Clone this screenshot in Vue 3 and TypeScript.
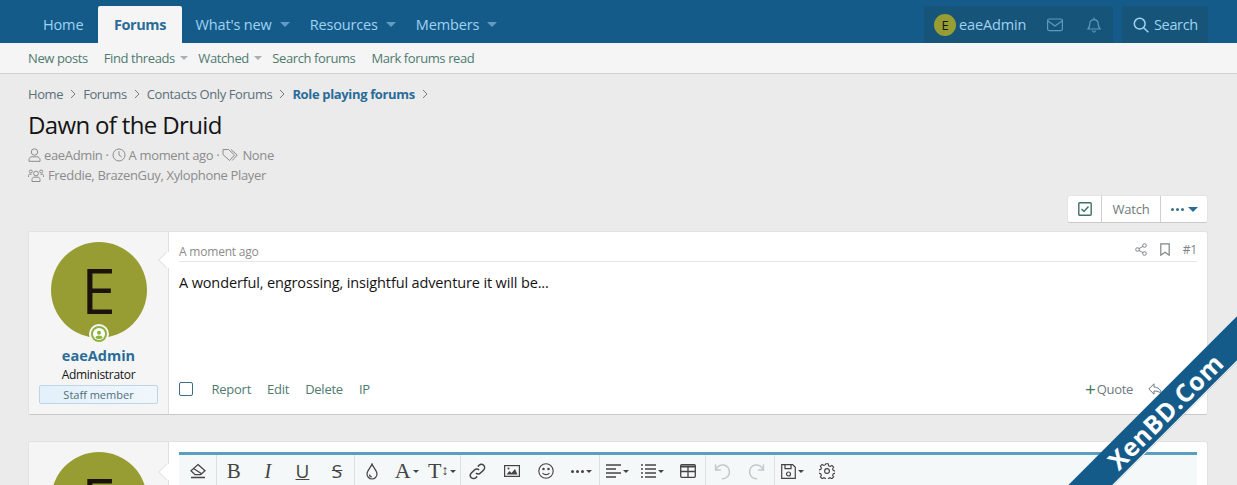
<script setup lang="ts">
interface NavItem {
  label: string
  active?: boolean
  caret?: boolean
}

const navItems: NavItem[] = [
  { label: 'Home' },
  { label: 'Forums', active: true },
  { label: "What's new", caret: true },
  { label: 'Resources', caret: true },
  { label: 'Members', caret: true }
]

const subItems: NavItem[] = [
  { label: 'New posts' },
  { label: 'Find threads', caret: true },
  { label: 'Watched', caret: true },
  { label: 'Search forums' },
  { label: 'Mark forums read' }
]

const crumbs = ['Home', 'Forums', 'Contacts Only Forums']
const postLinks = ['Report', 'Edit', 'Delete', 'IP']
</script>

<template>
  <div class="page">
    <header class="nav">
      <nav class="nav-left">
        <a v-for="item in navItems" :key="item.label" class="nav-tab" :class="{ active: item.active, 'has-caret': item.caret }">
          {{ item.label }}
          <i v-if="item.caret" class="caret" />
        </a>
      </nav>
      <div class="nav-right">
        <div class="visitor">
          <a class="visitor-item user">
            <span class="mini-avatar">E</span>
            eaeAdmin
          </a>
          <a class="visitor-item icon">
            <svg width="16" height="14" viewBox="0 0 16 14" fill="none" stroke="currentColor" stroke-width="1.2">
              <rect x="0.6" y="1" width="14.8" height="11.6" rx="1.5" />
              <path d="M1 3l7 5 7-5" />
            </svg>
          </a>
          <a class="visitor-item icon">
            <svg width="14" height="16" viewBox="0 0 14 16" fill="none" stroke="currentColor" stroke-width="1.2">
              <path d="M1 12c1.4-1.5 1.8-2.6 1.8-5.2C2.800 4.300 4.700 2.600 7 2.600s4.200 1.700 4.200 4.200c0 2.600.4 3.700 1.800 5.200z" />
              <path d="M7 .5v2M5.500 13.500c.2 1 .8 1.600 1.500 1.600s1.300-.6 1.500-1.600" />
            </svg>
          </a>
        </div>
        <a class="search-box">
          <svg width="16" height="16" viewBox="0 0 16 16" fill="none" stroke="currentColor" stroke-width="1.500">
            <circle cx="6.700" cy="6.700" r="5.400" />
            <path d="M10.700 10.700l4.600 4.600" />
          </svg>
          Search
        </a>
      </div>
    </header>

    <div class="subnav">
      <a v-for="item in subItems" :key="item.label" class="sub-link" :class="{ 'has-caret': item.caret }">
        {{ item.label }}
        <i v-if="item.caret" class="caret grey" />
      </a>
    </div>

    <main class="body">
      <ul class="crumbs">
        <li v-for="crumb in crumbs" :key="crumb">
          {{ crumb }}
          <svg class="chev" width="6" height="10" viewBox="0 0 6 10" fill="none" stroke="currentColor"><path d="M1 1l4 4-4 4" /></svg>
        </li>
        <li class="current">
          Role playing forums
          <svg class="chev" width="6" height="10" viewBox="0 0 6 10" fill="none" stroke="#6a7c86"><path d="M1 1l4 4-4 4" /></svg>
        </li>
      </ul>

      <h1 class="title">Dawn of the Druid</h1>

      <div class="meta">
        <svg width="13" height="14" viewBox="0 0 13 14" fill="none" stroke="currentColor"><circle cx="6.500" cy="4" r="3.200" /><path d="M1 13.300v-1.500c0-2 1.500-3 3-3h5c1.500 0 3 1 3 3v1.500z" /></svg>
        <span class="meta-text">eaeAdmin ·</span>
        <svg width="14" height="14" viewBox="0 0 14 14" fill="none" stroke="currentColor"><circle cx="7" cy="7" r="6" /><path d="M7 3.200V7l2.700 2" /></svg>
        <span class="meta-text">A moment ago ·</span>
        <svg width="17" height="14" viewBox="0 0 17 14" fill="none" stroke="currentColor"><path d="M1 1.500h5.500l6 5.500-5 5.500-6.500-6z" /><path d="M9 1.500l6.200 5.500-5 5.500" /></svg>
        <span class="meta-text">None</span>
      </div>
      <div class="meta second">
        <svg width="16" height="13" viewBox="0 0 16 13" fill="none" stroke="currentColor"><circle cx="8" cy="4.500" r="2.400" /><circle cx="2.800" cy="2.500" r="1.500" /><circle cx="13.200" cy="2.500" r="1.500" /><path d="M4 12.500v-2c0-1.500 1-2.300 2-2.300h4c1 0 2 .8 2 2.300v2zM.5 8V6.500c0-.8.500-1.200 1.200-1.200h1.800M15.500 8V6.500c0-.8-.5-1.200-1.200-1.200h-1.800" /></svg>
        <span class="meta-text">Freddie, BrazenGuy, Xylophone Player</span>
      </div>

      <div class="actions">
        <div class="btn-group">
          <a class="btn check">
            <svg width="14" height="14" viewBox="0 0 14 14" fill="none" stroke="#3f6e66" stroke-width="1.400"><rect x="0.800" y="0.800" width="12.400" height="12.400" rx="1" /><path d="M3.500 7l2.500 2.500 4.500-5" /></svg>
          </a>
          <a class="btn">Watch</a>
          <a class="btn more">
            <span class="dots"><i /><i /><i /></span>
            <i class="caret blue" />
          </a>
        </div>
      </div>

      <article class="card post">
        <aside class="user-cell">
          <div class="avatar-wrap">
            <div class="avatar">E</div>
            <span class="status">
              <svg width="12" height="12" viewBox="0 0 12 12"><circle cx="6" cy="6" r="6" fill="#fff" /><circle cx="6" cy="4.700" r="2" fill="#8cb33c" /><path d="M2.300 9.700c.6-1.500 2-2.200 3.700-2.200s3.100.7 3.700 2.200A5.200 5.200 0 0 1 6 11a5.200 5.200 0 0 1-3.700-1.300z" fill="#8cb33c" /></svg>
            </span>
          </div>
          <div class="user-name">eaeAdmin</div>
          <div class="user-title">Administrator</div>
          <div class="user-banner">Staff member</div>
        </aside>
        <div class="post-main">
          <i class="arrow" />
          <div class="post-head">
            <span>A moment ago</span>
            <span class="post-tools">
              <svg width="12" height="13" viewBox="0 0 12 13" fill="none" stroke="currentColor"><circle cx="2.500" cy="6.500" r="1.800" /><circle cx="9.500" cy="2.500" r="1.800" /><circle cx="9.500" cy="10.500" r="1.800" /><path d="M4 5.600l4-2.300M4 7.400l4 2.300" /></svg>
              <svg width="10" height="13" viewBox="0 0 10 13" fill="none" stroke="currentColor" stroke-width="1.200"><path d="M.8.800h8.400v11.400L5 9.300.8 12.200z" /></svg>
              <span>#1</span>
            </span>
          </div>
          <p class="post-text">A wonderful, engrossing, insightful adventure it will be...</p>
          <div class="post-foot">
            <div class="foot-left">
              <span class="checkbox" />
              <a v-for="link in postLinks" :key="link">{{ link }}</a>
            </div>
            <div class="foot-right">
              <a class="quote"><span class="plus">+</span>Quote</a>
              <svg width="14" height="12" viewBox="0 0 14 12" fill="none" stroke="#6b7a80"><path d="M6 .8L.8 6 6 11.200V8c3 0 5.500.5 7.500 3C13 6.500 10 4.200 6 4z" /></svg>
            </div>
          </div>
        </div>
      </article>

      <section class="card reply">
        <aside class="user-cell">
          <div class="avatar-wrap">
            <div class="avatar">E</div>
          </div>
        </aside>
        <div class="post-main">
          <i class="arrow low" />
          <div class="editor">
            <div class="toolbar">
              <span class="tb first">
                <svg width="18" height="16" viewBox="0 0 18 16" fill="none" stroke="#444" stroke-width="1.300"><path d="M9 1.500l7 6.200-4.500 4H6L2 7.700z" /><path d="M4.500 5.500l8.500 5.500M2 14.500h14" /></svg>
              </span>
              <span class="tb sep serif bold">B</span>
              <span class="tb serif ital">I</span>
              <span class="tb under">U</span>
              <span class="tb strike">S</span>
              <span class="tb sep">
                <svg width="12" height="17" viewBox="0 0 12 17" fill="none" stroke="#444" stroke-width="1.200"><path d="M6 1C5 4 1 7.500 1 11a5 5 0 0 0 10 0C11 7.500 7 4 6 1z" /><path d="M3.500 11.500c0 1.400 1 2.300 2.300 2.300" /></svg>
              </span>
              <span class="tb wide serif big">A<i class="caret dark" /></span>
              <span class="tb wide serif big">T<small>↕</small><i class="caret dark" /></span>
              <span class="tb sep">
                <svg width="17" height="17" viewBox="0 0 16 16" fill="none" stroke="#444" stroke-width="1.400"><path d="M6.500 9.500a3 3 0 0 0 4.300 0l3-3a3 3 0 0 0-4.300-4.300L8.300 3.400" /><path d="M9.500 6.500a3 3 0 0 0-4.300 0l-3 3a3 3 0 0 0 4.300 4.300l1.200-1.200" /></svg>
              </span>
              <span class="tb">
                <svg width="16" height="12" viewBox="0 0 16 12"><rect x="0.600" y="0.600" width="14.800" height="10.800" fill="none" stroke="#444" stroke-width="1.200" /><path d="M2.500 9.500l3-3.500 2 2 3.500-4 2.500 5.500z" fill="#444" /><circle cx="4.500" cy="3.500" r="1" fill="#444" /></svg>
              </span>
              <span class="tb">
                <svg width="16" height="16" viewBox="0 0 16 16" fill="none" stroke="#444" stroke-width="1.100"><circle cx="8" cy="8" r="7.200" /><circle cx="5.500" cy="6" r=".7" fill="#444" /><circle cx="10.500" cy="6" r=".7" fill="#444" /><path d="M4.500 10c1.800 2.200 5.200 2.200 7 0" /></svg>
              </span>
              <span class="tb wide"><span class="dots dark"><i /><i /><i /></span><i class="caret dark" /></span>
              <span class="tb sep wide">
                <svg width="15" height="14" viewBox="0 0 15 14" stroke="#444" stroke-width="1.300"><path d="M0 1h15M0 5h10M0 9h15M0 13h10" /></svg>
                <i class="caret dark" />
              </span>
              <span class="tb wide">
                <svg width="15" height="14" viewBox="0 0 15 14" stroke="#444" stroke-width="1.300"><path d="M0 1h2M4 1h11M0 5h2M4 5h11M0 9h2M4 9h11M0 13h2M4 13h11" /></svg>
                <i class="caret dark" />
              </span>
              <span class="tb">
                <svg width="16" height="14" viewBox="0 0 16 14" fill="none" stroke="#444" stroke-width="1.300"><rect x="0.700" y="0.700" width="14.600" height="12.600" rx="1" /><path d="M0.700 2.500h14.600" stroke-width="2" /><path d="M8 2v11M1 7.500h14" /></svg>
              </span>
              <span class="tb sep">
                <svg width="17" height="17" viewBox="0 0 16 16" fill="none" stroke="#c4c8ca" stroke-width="1.400"><path d="M1.500 1.500v5h5" /><path d="M1.800 6.500A6.500 6.500 0 1 1 7.500 14.800" /></svg>
              </span>
              <span class="tb">
                <svg width="17" height="17" viewBox="0 0 16 16" fill="none" stroke="#c4c8ca" stroke-width="1.400"><path d="M14.500 1.500v5h-5" /><path d="M14.200 6.500A6.500 6.500 0 1 0 8.500 14.800" /></svg>
              </span>
              <span class="tb sep wide">
                <svg width="15" height="15" viewBox="0 0 15 15" fill="none" stroke="#444" stroke-width="1.200"><path d="M.7.700h11l2.600 2.600v11H.7z" /><path d="M4 .7v4h6v-4" /><circle cx="7.500" cy="10" r="2" /></svg>
                <i class="caret dark" />
              </span>
              <span class="tb">
                <svg width="16" height="16" viewBox="0 0 16 16" fill="none" stroke="#444" stroke-width="1.100"><circle cx="8" cy="8" r="2.400" /><path d="M6.800.8h2.400l.4 2 1.500.7 1.800-1 1.700 1.700-1 1.800.7 1.500 2 .4v2.400l-2 .4-.7 1.500 1 1.800-1.700 1.700-1.800-1-1.500.7-.4 2H6.800l-.4-2-1.500-.7-1.800 1-1.700-1.700 1-1.800-.7-1.500-2-.4V6.800l2-.4.700-1.500-1-1.800 1.700-1.700 1.800 1 1.500-.7z" /></svg>
              </span>
            </div>
          </div>
        </div>
      </section>
    </main>

    <div class="ribbon"><span>XenBD.Com</span></div>
  </div>
</template>

<style>
html,
body {
  margin: 0;
  background: #ebebeb;
}
</style>

<style scoped>
.page {
  position: relative;
  height: 485px;
  overflow: hidden;
  background: #ebebeb;
  font-family: "Open Sans", "Noto Sans", sans-serif;
  font-size: 13px;
  color: #141414;
}

.nav {
  display: flex;
  justify-content: space-between;
  height: 43px;
  padding: 0 29px 0 28px;
  box-sizing: border-box;
  background: #155b8a;
}

.nav-left,
.nav-right {
  display: flex;
  align-items: flex-end;
}

.nav-tab {
  display: flex;
  align-items: center;
  gap: 8px;
  height: 37px;
  padding: 0 15px;
  color: #9fd3f2;
  font-size: 14.500px;
  letter-spacing: -0.150px;
}

.nav-tab.has-caret {
  padding: 0 6px 0 14px;
}

.nav-tab.active {
  padding: 0 15.500px;
  background: #f5f5f5;
  border-radius: 2px 2px 0 0;
  color: #2a6c98;
  font-weight: 700;
  letter-spacing: -0.400px;
}

.caret {
  display: inline-block;
  width: 0;
  height: 0;
  border: 5px solid transparent;
  border-top-color: #5f9dc6;
  border-bottom: 0;
}

.caret.grey {
  border-top-color: #a9b0b3;
}

.caret.blue {
  border-top-color: #2a6c98;
}

.caret.dark {
  border-width: 3.500px;
  border-bottom: 0;
  border-top-color: #444;
  margin-left: 2px;
}

.visitor {
  display: flex;
  align-items: center;
  width: 189px;
  height: 37px;
  background: #175479;
  border-radius: 2px 2px 0 0;
}

.visitor-item {
  display: flex;
  align-items: center;
  color: #9fd3f2;
  font-size: 14.500px;
  letter-spacing: -0.150px;
}

.visitor-item.user {
  gap: 3px;
  padding-left: 10px;
  width: 113px;
  box-sizing: border-box;
}

.visitor-item.icon {
  justify-content: center;
  width: 39px;
  color: #5b9cc4;
}

.mini-avatar {
  display: flex;
  align-items: center;
  justify-content: center;
  width: 22px;
  height: 22px;
  border-radius: 50%;
  background: #979d33;
  color: #141414;
  font-size: 13px;
}

.search-box {
  display: flex;
  align-items: center;
  gap: 5px;
  width: 86px;
  height: 37px;
  margin-left: 9px;
  padding-left: 11px;
  box-sizing: border-box;
  background: #175479;
  border-radius: 2px 2px 0 0;
  color: #9fd3f2;
  font-size: 14.500px;
  letter-spacing: -0.350px;
}

.subnav {
  display: flex;
  align-items: center;
  gap: 16px;
  height: 31px;
  padding: 0 28px;
  box-sizing: border-box;
  background: #f5f5f5;
  border-bottom: 1px solid #d0d0d0;
  color: #4f7a70;
  font-size: 13px;
  letter-spacing: -0.400px;
}

.sub-link {
  display: flex;
  align-items: center;
  gap: 5px;
}

.sub-link.has-caret {
  margin-right: -5.500px;
}

.sub-link .caret {
  border-width: 4px;
  border-bottom: 0;
}

.body {
  padding: 0 29px 0 28px;
}

.crumbs {
  display: flex;
  align-items: center;
  gap: 7px;
  margin: 11px 0 0;
  padding: 0;
  height: 18px;
  list-style: none;
  color: #5a6f78;
  letter-spacing: -0.400px;
}

.crumbs li {
  display: flex;
  align-items: center;
  gap: 7px;
}

.crumbs .current {
  color: #2a6c98;
  font-weight: 700;
  letter-spacing: -0.350px;
}

.chev {
  color: #6a7c86;
}

.title {
  margin: 5px 0 0;
  height: 33px;
  font-size: 24px;
  line-height: 33px;
  font-weight: 400;
  letter-spacing: -0.650px;
}

.meta {
  display: flex;
  align-items: center;
  gap: 3px;
  margin-top: 5px;
  height: 18px;
  color: #8c8c8c;
  letter-spacing: -0.350px;
}

.meta.second {
  margin-top: 2px;
  gap: 4px;
}

.actions {
  display: flex;
  justify-content: flex-end;
  margin-top: 11px;
}

.btn-group {
  display: flex;
  height: 28px;
  box-sizing: border-box;
  background: #fff;
  border: 1px solid #e4e4e4;
  border-bottom-color: #c8c8c8;
  border-radius: 3px;
}

.btn {
  display: flex;
  align-items: center;
  justify-content: center;
  color: #6e7a7c;
  width: 58px;
  border-left: 1px solid #cfcfcf;
  letter-spacing: -0.200px;
}

.btn.check {
  width: 33px;
  border-left: 0;
}

.btn.more {
  width: 46px;
  gap: 4px;
}

.dots {
  display: inline-flex;
  gap: 2px;
}

.dots i {
  width: 3px;
  height: 3px;
  border-radius: 50%;
  background: #3d6f88;
}

.dots.dark i {
  background: #444;
}

.card {
  display: flex;
  box-sizing: border-box;
  background: #fff;
  border: 1px solid #e2e2e2;
  border-bottom-color: #c8c8c8;
  border-radius: 3px;
}

.post {
  margin-top: 8px;
  height: 184px;
}

.reply {
  margin-top: 26px;
  height: 90px;
}

.user-cell {
  display: flex;
  flex-direction: column;
  align-items: center;
  width: 140px;
  flex-shrink: 0;
  padding: 10px 10px 0;
  box-sizing: border-box;
  background: #f5f5f5;
  border-right: 1px solid #dfdfdf;
  border-radius: 3px 0 0 3px;
}

.avatar-wrap {
  position: relative;
  width: 96px;
  height: 96px;
}

.avatar {
  display: flex;
  align-items: center;
  justify-content: center;
  width: 96px;
  height: 96px;
  border-radius: 50%;
  background: #979d33;
  color: #1a120b;
  font-size: 62px;
  line-height: 1;
}

.status {
  position: absolute;
  left: 38px;
  bottom: -6px;
  display: flex;
  align-items: center;
  justify-content: center;
  width: 20px;
  height: 20px;
  box-sizing: border-box;
  border-radius: 50%;
  background: #8cb33c;
  border: 2px solid #f5f5f5;
}

.user-name {
  margin-top: 8px;
  color: #2a6c98;
  font-size: 14.500px;
  font-weight: 700;
  line-height: 19px;
}

.user-title {
  font-size: 12px;
  line-height: 19px;
  letter-spacing: -0.300px;
}

.user-banner {
  width: 119px;
  height: 19px;
  margin-top: 1px;
  box-sizing: border-box;
  background: linear-gradient(90deg, #e2f0fa, #f0f7fc);
  border: 1px solid #bcd6e8;
  border-radius: 2px;
  color: #4f6e7c;
  font-size: 11px;
  line-height: 17px;
  text-align: center;
}

.post-main {
  position: relative;
  flex: 1;
  display: flex;
  flex-direction: column;
  padding: 0 10px;
  min-width: 0;
}

.arrow {
  position: absolute;
  left: -7px;
  top: 22px;
  width: 12px;
  height: 12px;
  background: #fff;
  transform: rotate(45deg);
  box-shadow: -1px 1px 0 #e2e2e2;
}

.arrow.low {
  top: 24px;
}

.post-head {
  display: flex;
  justify-content: space-between;
  align-items: flex-end;
  height: 30px;
  padding-bottom: 1px;
  box-sizing: border-box;
  border-bottom: 1px solid #e6e6e6;
  color: #8c8c8c;
  font-size: 12px;
  letter-spacing: -0.200px;
}

.post-tools {
  display: flex;
  align-items: center;
  gap: 13px;
  padding-bottom: 2px;
  color: #7d8488;
}

.post-text {
  flex: 1;
  margin: 0;
  padding-top: 11px;
  font-size: 14.500px;
  line-height: 20px;
  letter-spacing: -0.130px;
}

.post-foot {
  display: flex;
  justify-content: space-between;
  align-items: center;
  height: 40px;
  padding-bottom: 10px;
  box-sizing: border-box;
}

.foot-left {
  display: flex;
  align-items: center;
  gap: 16px;
  color: #4f7a70;
  letter-spacing: -0.250px;
}

.checkbox {
  width: 14px;
  height: 14px;
  box-sizing: border-box;
  margin-right: 2.500px;
  background: #fff;
  border: 1.500px solid #3f6e80;
  border-radius: 2px;
}

.foot-right {
  display: flex;
  align-items: center;
  gap: 15px;
  color: #6e7a7c;
  padding-right: 35px;
}

.plus {
  color: #3e7a60;
  font-size: 19px;
  line-height: 1;
  margin-right: 1px;
}

.quote {
  display: flex;
  align-items: center;
  letter-spacing: -0.300px;
}

.editor {
  margin-top: 10px;
  border-top: 3px solid #5a9fbd;
}

.toolbar {
  display: flex;
  align-items: center;
  height: 32px;
  background: #f4f8f8;
  color: #444;
}

.tb {
  display: flex;
  align-items: center;
  justify-content: center;
  width: 34.600px;
  height: 32px;
  box-sizing: border-box;
  font-size: 17px;
}

.tb.first {
  width: 37px;
}

.tb.sep {
  border-left: 1px solid #dcdfe0;
}

.tb.wide {
  width: 35.500px;
}

.serif {
  font-family: "Liberation Serif", serif;
}

.bold {
  font-size: 21px;
}

.ital {
  font-style: italic;
  font-size: 20px;
}

.big {
  font-size: 22px;
}

.big small {
  font-size: 14px;
}

.under {
  text-decoration: underline;
  font-size: 19px;
}

.strike {
  text-decoration: line-through;
  font-size: 19px;
}

.ribbon {
  position: absolute;
  left: 965px;
  top: 395px;
  display: flex;
  align-items: center;
  justify-content: center;
  width: 400px;
  height: 31px;
  background: #155b8a;
  border-bottom: 1px solid #fff;
  transform: rotate(-45deg);
  color: #fff;
  font-size: 25px;
  font-weight: 700;
  letter-spacing: 0.500px;
}
</style>
